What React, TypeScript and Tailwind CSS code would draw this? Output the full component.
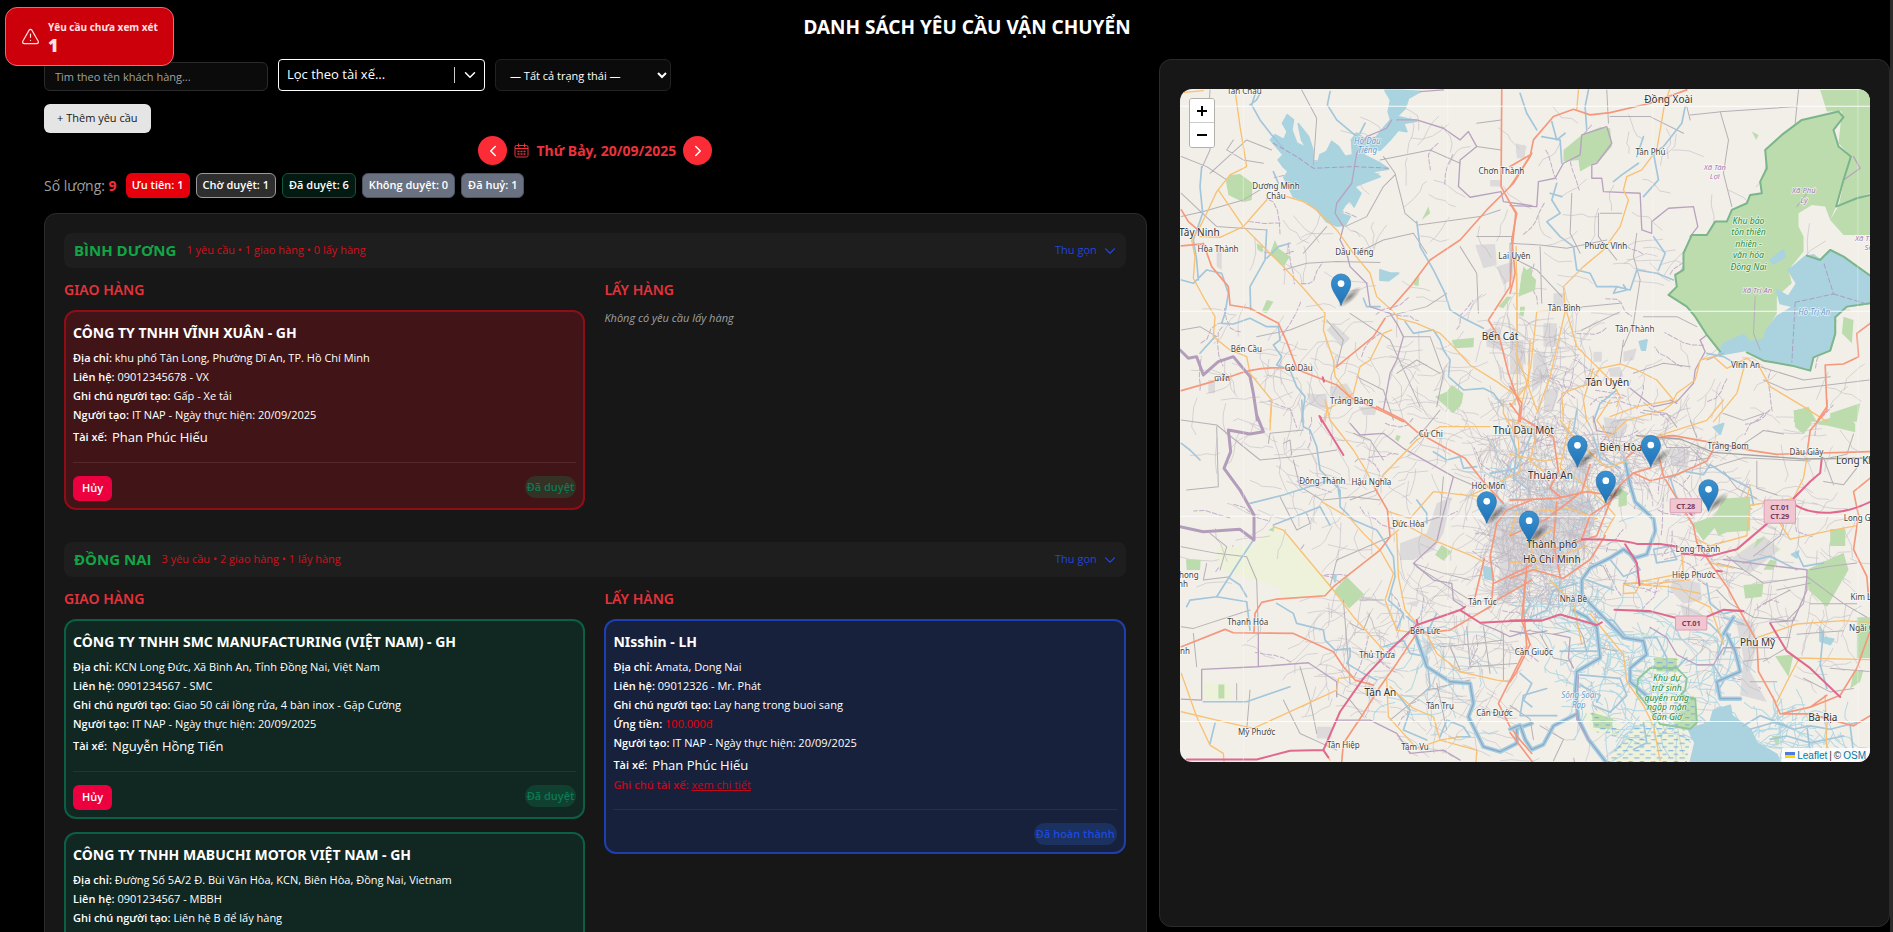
import { AlertTriangle, ChevronDown, ChevronLeft, ChevronRight } from "lucide-react";

type Tone = "red" | "green" | "blue";

type Request = {
  name: string;
  address: string;
  contact: string;
  note: string;
  advance?: string;
  creator: string;
  driver: string;
  hasDriverNote?: boolean;
  status: string;
  tone: Tone;
};

type Region = {
  name: string;
  summary: string;
  deliveries: Request[];
  pickups: Request[];
};

const regions: Region[] = [
  {
    name: "BÌNH DƯƠNG",
    summary: "1 yêu cầu • 1 giao hàng • 0 lấy hàng",
    deliveries: [
      {
        name: "CÔNG TY TNHH VĨNH XUÂN - GH",
        address: "khu phố Tân Long, Phường Dĩ An, TP. Hồ Chí Minh",
        contact: "09012345678 - VX",
        note: "Gấp - Xe tải",
        creator: "IT NAP - Ngày thực hiện: 20/09/2025",
        driver: "Phan Phúc Hiếu",
        status: "Đã duyệt",
        tone: "red",
      },
    ],
    pickups: [],
  },
  {
    name: "ĐỒNG NAI",
    summary: "3 yêu cầu • 2 giao hàng • 1 lấy hàng",
    deliveries: [
      {
        name: "CÔNG TY TNHH SMC MANUFACTURING (VIỆT NAM) - GH",
        address: "KCN Long Đức, Xã Bình An, Tỉnh Đồng Nai, Việt Nam",
        contact: "0901234567 - SMC",
        note: "Giao 50 cái lồng rửa, 4 bàn inox - Gặp Cường",
        creator: "IT NAP - Ngày thực hiện: 20/09/2025",
        driver: "Nguyễn Hồng Tiến",
        status: "Đã duyệt",
        tone: "green",
      },
      {
        name: "CÔNG TY TNHH MABUCHI MOTOR VIỆT NAM - GH",
        address: "Đường Số 5A/2 Đ. Bùi Văn Hòa, KCN, Biên Hòa, Đồng Nai, Vietnam",
        contact: "0901234567 - MBBH",
        note: "Liên hệ B để lấy hàng",
        creator: "IT NAP - Ngày thực hiện: 20/09/2025",
        driver: "Nguyễn Hồng Tiến",
        status: "Đã duyệt",
        tone: "green",
      },
    ],
    pickups: [
      {
        name: "NIsshin - LH",
        address: "Amata, Dong Nai",
        contact: "09012326 - Mr. Phát",
        note: "Lay hang trong buoi sang",
        advance: "100.000đ",
        creator: "IT NAP - Ngày thực hiện: 20/09/2025",
        driver: "Phan Phúc Hiếu",
        hasDriverNote: true,
        status: "Đã hoàn thành",
        tone: "blue",
      },
    ],
  },
];

const counters = [
  { label: "Ưu tiên: 1", className: "bg-[#e7000b]" },
  { label: "Chờ duyệt: 1", className: "border border-[#9a9a9a] bg-[#2e2e2e]" },
  { label: "Đã duyệt: 6", className: "border border-[#0b5a3c] bg-[#021a12]" },
  { label: "Không duyệt: 0", className: "border border-[#4a5565] bg-[#6a7282]" },
  { label: "Đã huỷ: 1", className: "border border-[#4a5565] bg-[#6a7282]" },
];

const cardTone: Record<Tone, string> = {
  red: "border-[#8f0d15] bg-[#411517]",
  green: "border-[#0b5f45] bg-[#112722]",
  blue: "border-[#1e3fae] bg-[#18213c]",
};

const dividerTone: Record<Tone, string> = {
  red: "border-[#54292b]",
  green: "border-[#1f3732]",
  blue: "border-[#26304a]",
};

const statusTone: Record<Tone, string> = {
  red: "bg-[#333225] text-[#0b7a55]",
  green: "bg-[#10402f] text-[#0b7a55]",
  blue: "bg-[#1b315f] text-[#1d49dc]",
};

function Field({ label, children }: { label: string; children: React.ReactNode }) {
  return (
    <p className="text-[11px] leading-[19px] text-white">
      <strong className="font-semibold">{label}</strong> {children}
    </p>
  );
}

function RequestCard({ request }: { request: Request }) {
  return (
    <article className={`rounded-xl border-2 px-[7px] pt-[9px] pb-[7px] ${cardTone[request.tone]}`}>
      <h4 className="mb-[3px] font-['Noto_Sans',sans-serif] text-sm leading-6 font-bold text-white">{request.name}</h4>
      <Field label="Địa chỉ:">{request.address}</Field>
      <Field label="Liên hệ:">{request.contact}</Field>
      <Field label="Ghi chú người tạo:">{request.note}</Field>
      {request.advance && (
        <Field label="Ứng tiền:">
          <span className="text-[#e7000b]">{request.advance}</span>
        </Field>
      )}
      <Field label="Người tạo:">{request.creator}</Field>
      <p className="mt-[3px] flex items-center gap-[5px] text-[13px] leading-5 text-white">
        <strong className="text-[11px] font-semibold">Tài xế:</strong>
        {request.driver}
      </p>
      {request.hasDriverNote && (
        <p className="text-[11px] leading-[19px] text-[#c10a1c]">
          <strong className="font-semibold">Ghi chú tài xế:</strong>{" "}
          <a href="#ghi-chu" className="underline">
            xem chi tiết
          </a>
        </p>
      )}
      <div className={`mt-[15px] flex items-start border-t pt-[13px] ${dividerTone[request.tone]}`}>
        {request.tone !== "blue" && (
          <button
            type="button"
            className="h-[25px] rounded-md bg-[#ec003f] px-[9px] text-[11px] font-semibold text-white"
          >
            Hủy
          </button>
        )}
        <span
          className={`ml-auto h-[22px] rounded-full px-0.5 text-[11px] leading-[22px] font-semibold ${statusTone[request.tone]}`}
        >
          {request.status}
        </span>
      </div>
    </article>
  );
}

function RequestColumn({
  title,
  empty,
  requests,
}: {
  title: string;
  empty: string;
  requests: Request[];
}) {
  return (
    <section className="min-w-0">
      <h3 className="mb-2.5 font-['Noto_Sans',sans-serif] text-sm leading-5 font-semibold text-[#e5323a]">{title}</h3>
      {requests.length === 0 ? (
        <p className="text-[11px] leading-4 text-[#a1a1a1] italic">{empty}</p>
      ) : (
        <div className="flex flex-col gap-[13px]">
          {requests.map((request) => (
            <RequestCard key={request.name} request={request} />
          ))}
        </div>
      )}
    </section>
  );
}

function RegionGroup({ region }: { region: Region }) {
  return (
    <section className="mb-8">
      <header className="mb-3 flex h-[35px] items-center rounded-lg bg-[#1e1e1e] pr-[7px] pl-2.5">
        <h2 className="text-[15px] font-bold text-[#12a546]">{region.name}</h2>
        <span className="ml-2.5 text-[11px] font-medium text-[#d4101a]">{region.summary}</span>
        <button type="button" className="ml-auto flex items-center gap-1 text-[11px] text-[#2146d8]">
          Thu gọn
          <ChevronDown size={18} strokeWidth={1.5} />
        </button>
      </header>
      <div className="grid grid-cols-2 gap-[19px]">
        <RequestColumn title="GIAO HÀNG" empty="Không có yêu cầu giao hàng" requests={region.deliveries} />
        <RequestColumn title="LẤY HÀNG" empty="Không có yêu cầu lấy hàng" requests={region.pickups} />
      </div>
    </section>
  );
}

// ---- Map ----

type MapSheet = {
  transform: string;
  farmland?: string;
  forest: string;
  urban: string;
  water: string;
  streams: string;
  rivers: string;
  minor: string;
  primary: string;
  trunk: string;
  motorway: string;
  boundary: string;
};

const northWest: MapSheet = {
  transform: "translate(-90 -147)",
  forest:
    "M240 405L270 402L308 430L305 480L280 487L235 465L228 425ZM375 600L360 640L400 680L420 650L385 625ZM350 780L370 785L350 820L335 815ZM905 1035L940 1060L935 1090L910 1120L855 1070L890 1055ZM905 900L972 893L970 922L915 925ZM1145 680L1115 700L1108 755L1145 750ZM1085 770L1060 805L1045 800L1070 770ZM320 610L340 620L335 638L322 628ZM835 500L840 520L815 540ZM795 715L808 710L805 738L790 735Z",
  urban:
    "M975 615L1035 612L1040 675L1000 685ZM1040 680L1090 665L1090 715L1060 735ZM530 870L550 850L600 895L575 920ZM1020 420h35v20h-35ZM1005 870L1050 860L1055 930L1010 920ZM1080 920h45v50h-45ZM540 1040L590 1030L620 1080L600 1100L540 1070ZM470 1060L530 1065L535 1110L480 1095ZM200 620L215 620L215 690L200 680ZM1098 310L1130 320L1120 350L1098 340ZM175 1020h20v40h-20Z",
  water:
    "M400 345L385 360L398 378L415 395L402 412L430 470L470 485L500 510L530 545L560 558L585 555L600 530L570 520L585 495L600 480L612 500L632 460L612 440L650 425L690 410L665 395L715 387L690 370L640 345L655 325L690 330L720 300L745 270L770 275L760 250L800 243L740 230L765 205L775 175L810 155L745 152L705 152L722 180L715 215L722 240L700 265L680 290L650 300L620 280L605 300L608 345L585 350L565 320L545 305L530 335L510 345L505 365L490 370L488 330L475 290L445 252L455 300L470 325L440 310L425 270L430 240L412 225L398 250L412 275L402 300L375 285L362 300ZM690 690L720 700L745 700L715 722L690 720ZM605 470L608 490L595 478Z",
  streams:
    "M318 155L305 195L330 240L365 285L400 325M540 155L532 195L560 240L620 290M155 380L150 440L158 520L130 600L140 660L145 720M350 570L345 660L300 740L302 810M94 720L130 730L170 690L215 700L235 760L225 820L215 850L250 852L300 835L350 860L385 860L390 900L370 915L395 950L380 975L420 990L440 1040L465 1070L455 1145M800 545L810 620L850 690L885 760L900 810L940 835L1000 865M765 845L790 880L850 870L870 900L880 930L900 960L895 1010L940 1050L1000 1045L1030 1060L1060 1100M420 610L385 620L350 655M640 775L650 800L690 800M300 195L320 180L330 160M630 280L645 250M370 395L385 430M195 890L150 940",
  rivers: "",
  minor:
    "M455 150L500 235L490 375M180 150L175 230L180 330L155 385M94 530L160 515L280 480L330 450M180 400L290 300L365 330M400 690L470 670L560 665L690 668M700 350L735 400L765 520L800 550M690 360L840 330L930 370M805 555L990 530L1050 510M830 640L790 580L700 600L620 640M585 560L650 530L700 440L735 405M94 870L150 860L200 890M560 980L580 900L530 840M710 830L830 800L890 760M760 890L840 890L880 1000L860 1100M94 350L170 380L230 420M460 640L530 560M600 820L720 900L770 1010L810 1100M980 320L1053 330M980 590L1085 590M930 620L980 700L985 820M1053 240L980 250M250 300L230 330L280 360L340 370M740 1000L800 960L870 1000M620 1010L700 1050L730 1140M320 890L420 870L520 830M94 460L200 560L350 570",
  primary:
    "M94 158L160 152M255 150L270 260L290 380L240 405L200 455L170 520L150 560L125 600L135 650L130 715L165 780L195 830L190 890L240 930L290 950L300 1000L365 1080L360 1145M205 450L280 560L400 680L460 745L525 820L520 870L550 960L555 1010L600 1070M350 480L310 525L280 560L210 592L150 590M410 470L460 485L500 510L540 550L560 570L610 640L660 700L680 770L730 815L745 835L800 850L870 880L910 920L960 975L1040 1025L1110 1075M725 870L700 880L660 960L630 980L610 1060L530 1110L525 1145M1100 700L1102 1080M1140 900L1135 1030L1080 1100",
  trunk:
    "M94 1052L240 1010Q340 970 445 990L560 1035L605 1075L700 1115L760 1145M160 610L185 680L235 740L240 795L300 805L385 850L410 905L440 985M94 618L160 612M94 510L115 545L150 575M1055 150L1053 440L1097 520L1085 640L1080 740L1015 840L1050 900L1075 1000L1110 1100L1105 1145M1145 340L1090 430L1010 510L930 600L840 660L780 740L720 808M705 835L670 890L560 980",
  motorway: "M510 1130L515 1145M518 1012L522 1025",
  boundary:
    "M810 155L880 150M725 240L710 265L650 290L620 340L605 430L560 490L555 520L580 560L570 600L590 640L600 680L620 700L650 730L660 800L720 820L740 850L760 890L740 960L720 1000L700 1110M740 240L800 240L880 265L930 300L955 275L980 320L930 360L925 440L960 472L1053 455L1060 485L1145 497",
};

const northEast: MapSheet = {
  transform: "translate(990 -147)",
  forest:
    "M875 240L985 215L1000 232L970 270L985 320L1022 350L1000 420L978 500L960 540L945 500L905 495L865 520L865 560L880 590L880 635L835 690L845 730L800 770L800 820L770 870L760 900L720 910L700 905L650 930L630 935L605 900L590 885L555 830L530 800L475 765L500 740L495 705L520 690L520 640L545 585L590 585L615 545L650 545L665 510L710 490L720 465L755 460L750 425L770 385L765 330L815 285ZM930 150L1080 150L1080 460L1040 475L985 500L1000 430L1022 350L985 310L995 215L950 215ZM960 540L990 490L1080 465L1080 585L1000 585ZM215 285L270 262L300 265L305 320L270 360L210 395L205 360L160 365L160 330ZM40 680L78 720L75 750L25 770ZM30 800L45 800L40 830L28 825ZM1000 830L1030 840L1025 910L995 880ZM860 1110L895 1100L920 1145L850 1145ZM960 1120L1050 1090L1040 1145L960 1145ZM725 275L745 285L738 300Z",
  urban:
    "M100 850h40v70h-40ZM70 940L105 935L115 1010L65 1060ZM105 1050L150 1040L130 1110L100 1120ZM0 900h40v100h-40ZM20 315h25v40h-25ZM340 935L380 925L370 960L340 965ZM250 935h25v30h-25ZM295 985L330 980L340 1010L300 1010ZM130 760L165 760L160 800L130 800Z",
  water:
    "M885 650L910 645L930 660L960 630L1000 650L1080 710L1080 790L1010 800L975 830L975 880L960 930L910 950L900 990L845 975L760 960L710 930L625 945L640 910L700 885L720 905L760 900L770 870L800 830L850 800L810 790L800 750L835 770L860 730L835 690L850 680ZM780 660L820 630L825 650L790 672ZM388 905L410 900L405 930L395 930Z",
  streams:
    "M30 160L50 220L80 270M235 150L225 200L230 270M525 200L515 250L460 320L430 340L445 420L400 470M140 430L125 480L150 520L110 545L150 590L190 620L200 690L240 700L260 740L320 740L360 750L380 690L440 700L490 720M430 590L465 640L445 690M95 290L150 300L155 370M125 245L140 300L165 280M310 425L335 405L385 370M400 290L380 350M590 940L640 950L700 985M250 1145L270 1090L320 1050M320 740L310 760L350 750L340 735M120 460L155 470",
  rivers: "",
  minor:
    "M0 610L90 615L170 625L290 600M90 620L95 790M0 650L80 690L155 770M630 215L655 300L640 400L665 500M540 225L640 215L860 200M290 150L295 250M185 460L180 580L210 640M265 520L265 590L320 660M270 520L335 520M380 580L370 650L390 720L370 850L340 920M215 870L330 815M165 815L220 800L330 790M400 830L500 830L560 860M330 970L340 900M750 980L880 1020L960 1010M735 770L730 880L750 930M370 1000L460 970L540 980M590 960L640 940M300 230L420 230L520 280M0 700L0 610M890 460L860 500M855 250L865 150M540 240L530 200M760 1020L830 1050L1077 1020",
  primary:
    "M205 150L200 208M478 150L462 200L440 330L395 390L350 410L340 450L355 480L330 560L280 630L220 680L190 710L160 740L165 800L200 920L260 980L300 1020L330 1070L320 1100M165 815L120 1010L80 1120M165 810L80 815L62 980L35 1090M490 1080L440 1020L380 990L330 972L270 985L240 1030L155 1060L160 1145M490 1080L380 1100L300 1130M490 1080L500 1060L555 1020L570 960L610 950L650 985L710 955L750 985L780 1040L880 1100L950 1145M705 970L680 1060L610 1145M18 620L22 950L80 1110M250 985L220 1080L230 1145",
  trunk:
    "M0 440L60 350L70 300L130 230L190 208L240 225L300 218L420 190L460 175L530 150M0 380L60 345M0 490L20 520L5 600L15 700L0 760M1080 850L1040 880L1045 950L1000 972L945 975L950 1100L920 1145M0 1040L35 1090L30 1145",
  motorway: "",
  boundary:
    "M0 497L80 500L85 425L135 415L160 370L210 345L215 285L290 260L305 310L260 370L245 375L245 415L275 415L280 455L390 460L395 570L425 580L425 545L475 505L550 500L563 560L540 590M590 885L570 900L585 935L555 990L550 1030L500 1085L430 1100L360 1045M1000 420L1050 385L1030 350",
};

const southWest: MapSheet = {
  transform: "translate(-90 933)",
  farmland:
    "M200 440L310 440L370 380L400 390L500 510L550 570L525 588L395 592L385 560L210 510ZM160 850L240 850L245 900L165 900Z",
  forest:
    "M552 572L590 530L643 583L597 625ZM108 478L152 480L150 510L110 510ZM205 853h18v42h-18ZM875 435L905 455L880 482L855 465ZM900 0L935 0L930 20L910 35ZM355 390L375 378L370 395ZM740 105L752 108L745 125L735 118Z",
  urban:
    "M860 310L905 290L880 400L850 450L790 480L750 480L750 430L830 400ZM500 980h45v35h-45ZM820 710L850 740L840 760L820 760ZM625 20L680 20L675 45L640 45ZM1000 320L1040 300L1145 330L1145 560L1040 570L1050 500L1030 440ZM1050 540L1090 560L1080 610L1040 600ZM765 610L810 600L800 620Z",
  water: "M1000 500L1025 505L1030 540L1005 535ZM550 530L558 525L555 545Z",
  streams:
    "M455 0L460 80L480 90L500 140L510 210L540 240L570 270L570 320L610 360L680 390L700 420L730 470L735 530L715 600L760 640L740 690M94 130L120 150L150 180M300 310L400 285L540 240M310 420L270 480L200 590M380 610L430 640L440 670L520 690L525 720L555 750L600 745L600 770L590 790L640 820L680 840M370 375L510 320L540 375M110 620L120 600L200 590L290 605L300 690M240 535L270 555L290 590M850 155L890 180L930 170L940 205L980 200M1020 220L1100 205L1145 100M160 905L290 905L420 860M195 970L180 1030M560 240L570 300M800 300L830 340L830 370M700 740L760 720L780 760L830 770L840 860L820 880M860 640L830 700L770 650M740 880L780 930L760 990L830 1020M870 1010L890 960L940 980L960 1010L920 1010M1110 820L1145 850L1120 900L1145 920",
  rivers: "M795 700L830 800L900 845L960 850L970 910L955 950L1000 1040L1050 1055L1100 1030L1100 985L1145 970",
  minor:
    "M94 60L200 75L330 180L430 170L560 150M200 80L205 260L110 270M355 130L360 100L460 90M400 130L420 120L425 165M430 180L450 260L515 300M520 300L610 290L690 300M390 290L410 330L440 390L480 370L470 340M600 300L680 270M94 440L200 460L290 470M170 490L160 540L240 530M290 470L320 540L325 700M540 560L560 480L720 410M630 600L700 600M600 670L640 690L660 640M94 680L130 685L300 630M210 510L230 440L180 400M580 600L600 850M450 800L480 900L500 1000M260 850L260 900M130 700L140 800M300 870L290 990M400 900L450 1000L560 1050M700 180L660 120L610 100M790 490L880 520L960 540M800 500L960 600M870 30L830 80L780 130M880 230L870 350L780 380M910 230L980 260M640 950L600 900L560 880M860 850L890 990M720 960L830 870L960 840M870 740L980 730L1060 720M950 680L960 800L1100 790M1000 680L1020 820M1060 700L1060 840M900 740L930 810",
  primary:
    "M525 0L540 60L610 150L650 215L675 265M370 380L400 390L450 450L550 570L610 650L700 750M515 305L600 355L640 400L690 450L730 520L705 600L740 690L800 700M740 400L745 530L765 630L800 670M715 335L780 355L850 275L960 287L1060 240L1110 215L1105 120L1060 40L1060 0M700 225L800 120L870 80L1020 80M740 360L850 420L960 465L1000 485M365 0L360 90M94 820L140 950L180 1035L220 1060L222 1085M94 935L200 960L310 985L430 930L560 870L565 835L610 830M710 840L715 950L800 1045M720 860L790 925L850 950L870 1020L980 1050L978 1085M830 700L860 760L930 815L1040 840L1080 845M720 410L745 390M1010 350L1000 290L960 287M800 1045L870 1020L930 1010M520 1050L540 1080",
  trunk:
    "M680 20L760 60L800 95L880 140L945 175L1000 245L1060 310M675 265L712 330L720 410L690 450L550 560L525 587L380 597L335 607L315 640L312 695M94 740L225 688L250 698L430 700L550 755L580 800L615 840L670 855M575 1085L580 1030L640 940L690 860L740 790L800 700L900 690L960 655L1020 620L1040 600L1145 540M1145 300L1070 330L1040 370L1020 470L1030 540L1025 600M1003 475L975 590M1130 500L1120 620L1130 740L1080 840L1045 910L1080 980L1110 1020L1145 1060M1030 550L1145 495",
  motorway:
    "M508 48L580 165M110 1078L320 1078L420 1052L520 1050L570 935L640 835L720 750L800 675L930 630L990 668L1145 660M520 1050L535 1072M800 660L803 675M930 630L945 620",
  boundary:
    "M600 70L630 105L700 100L760 145L910 230L880 340L860 425L790 490L850 540L905 550L910 600L940 620M155 900L155 808L320 800L475 788L560 845L560 890M94 897L155 900M325 700V800M560 960L660 960L740 1000L780 1060L880 1050L930 1080M990 670L1040 690L1080 710L1140 690",
};

const southEast: MapSheet = {
  transform: "translate(990 933) scale(1 1.018)",
  farmland:
    "M400 940L480 960L540 1000L530 1070L290 1070L340 1000ZM210 920L300 910L340 990L250 980ZM380 690L430 680L410 700ZM420 780L510 760L500 810L420 800ZM670 450L760 400L820 440L720 510Z",
  forest:
    "M850 30L890 25L905 70L880 100L855 80ZM905 70L1000 40L1035 70L1035 95L950 75ZM640 290L720 285L720 385L650 390L625 400L600 350L620 330ZM545 365L600 345L620 370L580 415ZM890 500L1000 450L1015 500L950 610L895 560ZM960 380h45v50h-45ZM700 545L760 540L755 580L705 585ZM795 755L850 750L835 815ZM1040 640h40v120h-40ZM430 760L500 760L500 800L440 800ZM245 920L310 940L300 970L250 965ZM475 935L550 870L560 960L520 975ZM325 260L350 270L350 310L325 315ZM740 410L765 405L730 440ZM780 470L800 475L790 500L760 500ZM1030 800L1060 795L1050 830L1020 850ZM785 990L810 990L800 1020Z",
  urban:
    "M0 350L100 300L200 250L260 330L230 420L150 500L0 520ZM675 640L730 655L740 720L720 800L770 890L690 870L700 760ZM490 520L570 540L575 590L520 600L480 560ZM180 180L250 190L220 250L190 240ZM510 600L560 620L600 650L520 640ZM480 140L540 150L530 210L480 190ZM760 400L810 440L720 510L660 470ZM280 50L350 60L340 110L290 110Z",
  water:
    "M535 970L600 950L610 915L660 900L665 930L720 970L740 1010L800 1045L810 1070L540 1070L555 1010ZM845 455L865 445L860 465ZM930 670L940 700L970 705L960 720L930 710ZM610 80L640 70L630 100ZM620 910L633 905L628 935Z",
  streams:
    "M0 100L20 150L10 230L50 260M200 30L190 90L220 130M500 290L480 230L520 210L580 220L600 190L660 230L720 260L730 310M430 440L480 430L500 470L440 480L430 440M300 470L340 520L390 500L360 460M590 540L600 600L640 630L680 620M700 480L780 460L860 500M860 450L880 490L940 480M940 680L930 780L950 850M620 760L640 700L600 660L560 640L520 670M560 780L610 780L640 830L620 860M260 640L310 650L350 700M30 560L60 600L40 640M210 810L330 820L350 870L300 920L250 900M210 840L270 870L260 890M110 850L40 870L30 930L140 930M470 800L470 760L440 700L400 700M720 970L790 950L850 970L900 960L960 970L1040 950M780 1000L830 990L900 1010L1000 990M890 960L900 1040M1020 960L1030 1040M200 540L130 560L110 620L60 640M150 740L260 740M660 690L640 750M500 790L530 760M400 950L410 1010L370 1030M310 560L230 530M700 960L750 930L830 960M640 640L700 660M340 220L310 260M250 110L270 170L330 200",
  rivers:
    "M345 180L360 250L375 300L430 350L435 385L410 455L375 465L340 440L300 465L240 495L215 530L215 575L260 620L340 700L400 710L410 750L360 790L360 830L420 880M190 620L230 640L260 670L270 760L200 800L195 860L205 940L235 1000L290 1070M0 970L30 958L45 1000L65 1030L100 1015L130 960L200 925M650 690L675 740L690 800L620 830L630 880L690 880M640 690L670 640",
  minor:
    "M500 80L470 40L400 30M640 40L700 60L760 40M700 130L760 90L820 100M450 100L470 140L540 140L600 200L700 170L900 180M540 60L560 110M740 180L740 260L800 280M640 210L680 260L740 290M620 480L700 500L760 540L890 520M620 560L660 600L730 640L830 650L880 600L890 520M650 460L700 500M780 320L820 370L810 400L730 460M890 520L1000 600L1070 640M760 600L840 560M800 560L900 540M850 640L830 730L760 770M700 770L780 760M860 690L1000 680M880 820L960 860L1030 850M900 600L1040 600M1040 480L960 490L900 500M940 240L1000 250L1040 200M940 170L970 250M960 170L1010 160L1030 100M0 900L60 940L70 1000M90 960L160 1000L130 1063M240 480L280 490L300 530M340 540L400 540M200 660L220 700L230 740M90 690L130 760L180 770M60 680L130 690L180 680M270 730L320 740M540 180L600 170M760 700H840M720 730h60M720 830h80M960 790L1077 800",
  primary:
    "M300 0L260 60L295 110L350 60L460 30L500 0M0 60L80 90L60 180L100 210M150 60L200 120L290 200L350 180M640 0L590 60L430 110L380 105M890 170L880 230L850 290L720 310L710 400L600 430L560 410M840 410L960 385L1040 370M840 410L800 350M340 570L340 545L520 510L515 455M340 570L376 568L388 545L540 530M535 580L600 610L640 720M740 700L860 660L1000 650L1080 655M0 480L120 470L230 430M60 330L180 320L260 350M120 530L190 600L215 720M240 630L290 690L340 750L350 830L400 900L430 960L450 1063M860 760L1080 765M865 765L830 830L800 890M945 870L950 1040M600 480L670 495M400 545L470 550L570 570M180 60L150 200L210 240L280 300L315 340L280 400M80 500L60 420L130 380M0 160L100 180L160 170M20 330L0 400M710 290L720 250",
  trunk:
    "M350 170Q420 105 490 105L620 128L730 150L800 160L1080 152M610 145L590 180L500 220L420 238L370 215L330 250L300 300L240 340L215 410M422 200L370 215M450 180L460 225L500 290L550 370L560 420L600 480L650 550L700 640L740 710L745 800L790 880L810 925L900 905L950 870M0 295L140 290L230 270L300 280M0 10L30 50L130 110L145 210L120 260L150 285M0 525L70 500L160 525L240 470L285 400M45 530L35 650L60 720L20 800L0 830M0 980L70 1070M1080 230L1030 270L1045 340L1030 440L1070 520L1075 580M1080 680L1040 790L990 870L900 905M950 0L950 30L900 90L890 160M820 925H900L1030 960L1080 930M0 400L110 350L215 270L240 190M300 300L260 400L130 440M140 300L130 420L150 520",
  motorway:
    "M215 410Q340 410 380 424L450 424L500 432M515 452L600 460L680 440L770 365M855 310Q900 335 960 332T1080 300M850 290L900 240L930 215L935 170M345 425L380 480L388 545M0 650H95L150 632L260 663L275 655M313 618L420 622L490 640L550 655L640 618L700 622M780 658L830 740L900 790L990 875M525 315L545 340M620 503L635 505",
  boundary:
    "M250 50L260 90L310 100M420 670L470 700L500 750L560 780L610 780L640 730L690 730M780 655L850 650L890 560L890 500L800 490L640 470M130 690L180 700L175 760L190 790M0 680L60 690L110 680M205 810L200 940L240 1010M480 0L500 10",
};

const sheets = [northWest, northEast, southWest, southEast];

// Small deterministic generator for the dense street mesh around the cities.
function streetMesh(cx: number, cy: number, rx: number, ry: number, count: number, seed: number) {
  let state = seed;
  const next = () => {
    state = (state * 16807) % 2147483647;
    return state / 2147483647;
  };
  let d = "";
  for (let i = 0; i < count; i++) {
    const angle = next() * Math.PI * 2;
    const radius = Math.sqrt(next());
    let x = cx + Math.cos(angle) * radius * rx;
    let y = cy + Math.sin(angle) * radius * ry;
    let heading = Math.floor(next() * 4) * 1.57 + 0.4;
    d += `M${x.toFixed(0)} ${y.toFixed(0)}`;
    for (let step = 0; step < 4; step++) {
      heading += (next() - 0.5) * 1.1;
      x += Math.cos(heading) * (12 + next() * 26);
      y += Math.sin(heading) * (12 + next() * 26);
      d += `L${x.toFixed(0)} ${y.toFixed(0)}`;
    }
  }
  return d;
}

const meshes = [
  streetMesh(1080, 1380, 170, 170, 300, 11),
  streetMesh(1120, 1150, 250, 160, 230, 23),
  streetMesh(1060, 860, 160, 180, 110, 31),
  streetMesh(1420, 1080, 220, 100, 80, 47),
  streetMesh(1035, 1035, 1035, 1000, 330, 59),
  streetMesh(1740, 1480, 300, 330, 110, 67),
  streetMesh(700, 1700, 330, 250, 130, 71),
  streetMesh(520, 1010, 330, 260, 90, 83),
];

const communeLines = [
  streetMesh(1035, 1035, 1035, 1000, 90, 127),
  streetMesh(1250, 1250, 350, 350, 60, 131),
];

const creeks = [
  streetMesh(1400, 1760, 240, 200, 150, 91),
  streetMesh(1160, 1560, 120, 120, 50, 97),
  streetMesh(1880, 1930, 150, 60, 50, 101),
  streetMesh(800, 1800, 180, 180, 30, 107),
  streetMesh(1150, 1220, 200, 160, 40, 109),
];

type LabelKind = "town" | "city" | "commune" | "reserve" | "lake";

const labelClass: Record<LabelKind, string> = {
  town: "fill-[#444444] text-[24px]",
  city: "fill-[#333333] text-[30px]",
  commune: "fill-[#a878b4] text-[23px] italic",
  reserve: "fill-[#2b8f3c] text-[26px] italic",
  lake: "fill-[#6a9cc8] text-[24px] italic",
};

const labels: [string, number, number, LabelKind][] = [
  ["Tân Châu", 193, 5, "town"],
  ["Dương Minh", 288, 290, "town"],
  ["Châu", 288, 320, "town"],
  ["Tây Ninh", 58, 429, "city"],
  ["Hòa Thành", 114, 479, "town"],
  ["Dầu Tiếng", 523, 488, "town"],
  ["Hồ Dầu", 562, 155, "lake"],
  ["Tiếng", 562, 183, "lake"],
  ["Chơn Thành", 964, 245, "town"],
  ["Lai Uyên", 1003, 501, "town"],
  ["Bến Cát", 960, 741, "city"],
  ["Bến Cầu", 199, 780, "town"],
  ["Gò Dầu", 356, 837, "town"],
  ["Trảng Bàng", 515, 934, "town"],
  ["បាវិត", 126, 865, "town"],
  ["Đồng Xoài", 1465, 31, "city"],
  ["Tân Phú", 1411, 187, "town"],
  ["Xã Tân", 1604, 233, "commune"],
  ["Lợi", 1604, 261, "commune"],
  ["Xã Phú", 1871, 303, "commune"],
  ["Lý", 1871, 332, "commune"],
  ["Khu bảo", 1705, 396, "reserve"],
  ["tồn thiên", 1705, 430, "reserve"],
  ["nhiên -", 1705, 464, "reserve"],
  ["văn hóa", 1705, 498, "reserve"],
  ["Đồng Nai", 1705, 533, "reserve"],
  ["Xã Trị An", 1732, 602, "commune"],
  ["Xã Thanh", 2072, 446, "commune"],
  ["Sơn", 2072, 475, "commune"],
  ["Hồ Trị An", 1902, 668, "lake"],
  ["Phước Vĩnh", 1277, 470, "town"],
  ["Tân Bình", 1152, 657, "town"],
  ["Tân Thành", 1364, 719, "town"],
  ["Vĩnh An", 1696, 827, "town"],
  ["Tân Uyên", 1282, 880, "city"],
  ["Củ Chi", 752, 1033, "town"],
  ["Thủ Dầu Một", 1030, 1023, "city"],
  ["Đông Thành", 427, 1173, "town"],
  ["Hậu Nghĩa", 574, 1176, "town"],
  ["Hóc Môn", 925, 1190, "town"],
  ["Đức Hòa", 685, 1302, "town"],
  ["Tân Túc", 907, 1538, "town"],
  ["Thạnh Hóa", 203, 1598, "town"],
  ["Bến Lức", 735, 1625, "town"],
  ["Thủ Thừa", 591, 1695, "town"],
  ["Tân An", 601, 1810, "city"],
  ["Tân Trụ", 780, 1849, "town"],
  ["Cần Đước", 943, 1871, "town"],
  ["Mỹ Phước", 230, 1926, "town"],
  ["Tân Hiệp", 490, 1967, "town"],
  ["Tầm Vu", 705, 1973, "town"],
  ["Cần Giuộc", 1061, 1686, "town"],
  ["Mộc Phong", -8, 1455, "town"],
  ["Thạnh", -12, 1484, "town"],
  ["Bình", 4, 1685, "town"],
  ["Biên Hòa", 1322, 1075, "city"],
  ["Thuận An", 1111, 1158, "city"],
  ["Trảng Bom", 1644, 1070, "town"],
  ["Dầu Giây", 1879, 1089, "town"],
  ["Long Khánh", 2052, 1114, "city"],
  ["Long Giao", 2048, 1285, "town"],
  ["Thành phố", 1115, 1366, "city"],
  ["Hồ Chí Minh", 1115, 1409, "city"],
  ["Long Thành", 1553, 1377, "town"],
  ["Hiệp Phước", 1541, 1455, "town"],
  ["Nhà Bè", 1180, 1528, "town"],
  ["Kim Long", 2064, 1522, "town"],
  ["Ngãi Giao", 2062, 1615, "town"],
  ["Phú Mỹ", 1732, 1660, "city"],
  ["Khu dự", 1460, 1768, "reserve"],
  ["trữ sinh", 1460, 1797, "reserve"],
  ["quyển rừng", 1460, 1826, "reserve"],
  ["ngập mặn", 1460, 1854, "reserve"],
  ["Cần Giờ", 1460, 1883, "reserve"],
  ["Sông Soài", 1196, 1817, "lake"],
  ["Rạp", 1196, 1845, "lake"],
  ["Bà Rịa", 1928, 1884, "city"],
];

const shields = [
  { x: 1517, y: 1250, lines: ["CT.28"] },
  { x: 1799, y: 1268, lines: ["CT.01", "CT.29"] },
  { x: 1533, y: 1602, lines: ["CT.01"] },
];

const pins = [
  [483, 650],
  [1192, 1135],
  [1412, 1134],
  [1277, 1241],
  [1585, 1267],
  [920, 1303],
  [1047, 1361],
];

function MapCanvas() {
  return (
    <svg
      viewBox="0 0 2070 2019"
      preserveAspectRatio="xMidYMid slice"
      className="h-full w-full bg-[#f2efe9] font-['Noto_Sans',sans-serif]"
      role="img"
      aria-label="Bản đồ yêu cầu vận chuyển"
    >
      <defs>
        <linearGradient id="pin" x1="0" y1="0" x2="0" y2="1">
          <stop offset="0" stopColor="#3b92cf" />
          <stop offset="1" stopColor="#1f72b8" />
        </linearGradient>
        <radialGradient id="pin-shadow">
          <stop offset="0" stopColor="#000000" stopOpacity="0.45" />
          <stop offset="1" stopColor="#000000" stopOpacity="0" />
        </radialGradient>
        <pattern id="marsh" width="34" height="22" patternUnits="userSpaceOnUse">
          <path d="M2 5H18M19 16H32" stroke="#6fa3e0" strokeWidth="3" />
        </pattern>
      </defs>

      <g fill="none" strokeLinejoin="round" strokeLinecap="round">
        {communeLines.map((d, i) => (
          <path key={i} d={d} stroke="#c3afc9" strokeWidth="3" strokeDasharray="14 6" />
        ))}
      </g>
      {sheets.map((sheet) => (
        <g key={sheet.transform} transform={sheet.transform}>
          {sheet.farmland && <path d={sheet.farmland} fill="#eef2da" />}
          <path d={sheet.urban} fill="#dcdadb" />
        </g>
      ))}

      <g fill="none" strokeLinejoin="round" strokeLinecap="round">
        {creeks.map((d, i) => (
          <path key={i} d={d} stroke="#b4d8e3" strokeWidth="3" />
        ))}
        {meshes.map((d, i) => (
          <path key={i} d={d} stroke="#bdb8c0" strokeWidth="2" opacity="0.8" />
        ))}
      </g>
      {sheets.map((sheet) => (
        <g key={sheet.transform} transform={sheet.transform}>
          <path d={sheet.forest} fill="#bcdcae" />
          <path d={sheet.water} fill="#aad3df" stroke="#aad3df" strokeWidth="6" strokeLinejoin="round" />
        </g>
      ))}
      <path
        d="M1390 1890L1470 1910L1530 1950L1520 2019L1280 2019L1330 1950ZM1230 1870L1290 1890L1330 1950L1250 1930ZM1420 1710L1500 1710L1490 1750L1410 1740ZM1480 1830L1540 1820L1550 1910L1480 1920Z"
        fill="url(#marsh)"
      />

      <g fill="none" strokeLinejoin="round" strokeLinecap="round">
        {sheets.map((sheet) => (
          <g key={sheet.transform} transform={sheet.transform}>
            <path d={sheet.minor} stroke="#b5b1b6" strokeWidth="3" />
            <path d={sheet.streams} stroke="#a3c6da" strokeWidth="5" />
            <path d={sheet.rivers} stroke="#a5cfe0" strokeWidth="13" />
            <path d={sheet.rivers} stroke="#8ea8c8" strokeWidth="4" />
            <path d={sheet.boundary} stroke="#b9a3bf" strokeWidth="4" />
            <path d={sheet.primary} stroke="#f8c173" strokeWidth="4" />
            <path d={sheet.trunk} stroke="#f5987c" strokeWidth="5" />
            <path d={sheet.motorway} stroke="#e0698e" strokeWidth="6" />
          </g>
        ))}
        {/* national border */}
        <path
          d="M0 783L25 808L50 803L70 858L115 818L160 803L210 863L220 913L232 993L230 978L250 1028L210 1035L145 1023L152 1088L132 1138L180 1203L222 1278L222 1353L180 1321L70 1328L0 1313"
          stroke="#b39dba"
          strokeWidth="9"
        />
        {/* reserve edges */}
        <path
          d="M1975 68L1865 93L1805 138L1755 183L1760 238L1740 278L1745 313L1710 318L1700 343L1655 363L1640 398L1605 398L1580 438L1535 438L1510 493L1510 543L1485 558L1490 593L1465 618L1520 653L1545 683L1580 738L1620 788M1975 68L1990 85L1960 123L1975 173L2012 203L1990 273L1968 353L2030 328L2070 318M1700 790L1750 815L1835 830L1890 845L1900 805L1950 785L1965 735L1965 685L2000 653L2070 643M1880 500L1920 513L1950 483L1990 503L2070 560"
          stroke="#7db58c"
          strokeWidth="6"
        />
        <path
          d="M1370 1798L1375 1768L1410 1737L1490 1737L1520 1768L1515 1803L1500 1819L1545 1829L1550 1900L1530 1920L1440 1905L1410 1860L1370 1810Z"
          stroke="#8fc79a"
          strokeWidth="6"
        />
        <path
          d="M280 163L350 203L400 238L520 233L630 238M1845 640L1960 615L1930 520M1845 640L1835 820M1960 615L2060 645"
          stroke="#a99fc0"
          strokeWidth="3"
          strokeDasharray="14 8"
        />
        <path d="M1370 1040L1500 1050L1600 1090L1870 1110L2070 1107" stroke="#a3a3a3" strokeWidth="4" />
      </g>

      {/* tile seams */}
      <path d="M0 52H2070M0 667H2070M0 1282H2070M0 1897H2070" stroke="#ffffff" strokeWidth="3" opacity="0.9" />
      <path d="M190 0V2019M803 0V2019M1418 0V2019M2033 0V2019" stroke="#ffffff" strokeWidth="3" opacity="0.35" />

      <g
        textAnchor="middle"
        dominantBaseline="central"
        stroke="#ffffff"
        strokeOpacity="0.6"
        strokeWidth="5"
        paintOrder="stroke"
        strokeLinejoin="round"
      >
        {labels.map(([text, x, y, kind]) => (
          <text key={`${text}-${x}-${y}`} x={x} y={y} className={labelClass[kind]}>
            {text}
          </text>
        ))}
      </g>

      {shields.map((shield) => {
        const height = shield.lines.length * 28 + 14;
        return (
          <g key={`${shield.x}-${shield.y}`}>
            <rect
              x={shield.x - 47}
              y={shield.y - height / 2}
              width="94"
              height={height}
              rx="4"
              fill="#efc6d2"
              stroke="#dd9fb2"
              strokeWidth="3"
            />
            {shield.lines.map((line, i) => (
              <text
                key={line}
                x={shield.x}
                y={shield.y + (i - (shield.lines.length - 1) / 2) * 28}
                textAnchor="middle"
                dominantBaseline="central"
                className="fill-[#7d3a56] text-[22px] font-bold"
              >
                {line}
              </text>
            ))}
          </g>
        );
      })}

      {pins.map(([x, y]) => (
        <g key={`${x}-${y}`} transform={`translate(${x} ${y})`}>
          <ellipse cx="26" cy="-26" rx="46" ry="15" fill="url(#pin-shadow)" transform="rotate(-42 26 -26)" />
          <path
            d="M0 0C-7 -24 -29 -42 -29 -66A29 29 0 0 1 29 -66C29 -42 7 -24 0 0Z"
            fill="url(#pin)"
            stroke="#2a6fa8"
            strokeWidth="2"
          />
          <circle cy="-66" r="10" fill="#ffffff" />
        </g>
      ))}
    </svg>
  );
}

function MapPanel() {
  return (
    <aside className="col-span-2 rounded-xl border border-[#2b2b2b] bg-[#171717] pt-[29px] pr-[19px] pl-5">
      <div className="relative h-[673px] overflow-hidden rounded-xl">
        <MapCanvas />
        <div className="absolute top-[9px] left-[9px] flex flex-col overflow-hidden rounded-[3px] border border-[#b3b0ac] text-black">
          <button
            type="button"
            aria-label="Phóng to"
            className="flex h-6 w-6 items-center justify-center border-b border-[#cccccc] bg-white"
          >
            <svg viewBox="0 0 10 10" className="h-2.5 w-2.5" stroke="currentColor" strokeWidth="2">
              <path d="M0 5H10M5 0V10" />
            </svg>
          </button>
          <button
            type="button"
            aria-label="Thu nhỏ"
            className="flex h-6 w-6 items-center justify-center bg-white"
          >
            <svg viewBox="0 0 10 10" className="h-2.5 w-2.5" stroke="currentColor" strokeWidth="2">
              <path d="M0 5H10" />
            </svg>
          </button>
        </div>
        <div className="absolute right-0 bottom-0 flex h-[14px] items-center gap-0.5 bg-white/80 pr-1 pl-[3px] font-['Liberation_Sans',sans-serif] text-[10px] text-[#333333]">
          <svg viewBox="0 0 10 6" className="h-1.5 w-2.5">
            <path fill="#4c7be1" d="M0 0h10v3H0z" />
            <path fill="#ffd500" d="M0 3h10v3H0z" />
          </svg>
          <a href="#leaflet" className="text-[#0078a8]">
            Leaflet
          </a>
          <span>|</span>
          <span>©</span>
          <a href="#osm" className="text-[#0078a8]">
            OSM
          </a>
        </div>
      </div>
    </aside>
  );
}

function Filters() {
  return (
    <div className="flex flex-wrap items-end gap-x-2.5 gap-y-[13px] text-[11px]">
      <input
        type="text"
        aria-label="Tìm theo tên khách hàng"
        placeholder="Tìm theo tên khách hàng..."
        className="h-[29px] w-56 rounded-md border border-[#2b2b2b] bg-[#0b0b0b] px-2.5 text-white placeholder:text-[#a1a1a1]"
      />
      <div className="relative">
        <select
          aria-label="Lọc theo tài xế"
          className="block h-8 w-[207px] appearance-none rounded-sm border border-white bg-black px-2 text-[13px] text-white"
        >
          <option>Lọc theo tài xế...</option>
        </select>
        <span className="pointer-events-none absolute inset-y-0 right-0 my-2 flex w-[31px] items-center justify-center border-l border-[#cccccc] text-white">
          <ChevronDown size={18} />
        </span>
      </div>
      <select
        aria-label="Trạng thái"
        className="h-8 w-[176px] rounded-md border border-[#222222] bg-[#0b0b0b] pl-2.5 text-[11px] text-white"
      >
        <option>— Tất cả trạng thái —</option>
      </select>
      <div className="w-full">
        <button type="button" className="h-[29px] rounded-md bg-[#e5e5e5] px-[13px] font-medium text-[#171717]">
          + Thêm yêu cầu
        </button>
      </div>
    </div>
  );
}

function CalendarIcon() {
  return (
    <svg viewBox="0 0 15 15" className="h-[15px] w-[15px]" fill="none" stroke="currentColor">
      <rect x="1" y="2.5" width="13" height="11.5" rx="1.5" />
      <path d="M1 5.5H14M4.5 0.5V4M10.5 0.5V4" />
      <path d="M3.5 8.5h2M6.5 8.5h2M9.5 8.5h2M3.5 11h2M6.5 11h2M9.5 11h2" strokeWidth="1.5" />
    </svg>
  );
}

function DateNav() {
  return (
    <div className="mt-[3px] flex items-center justify-center gap-[7px] text-[#ee323b]">
      <button
        type="button"
        aria-label="Ngày trước"
        className="flex h-[29px] w-[29px] items-center justify-center rounded-full bg-[#fb2c36] text-white"
      >
        <ChevronLeft size={18} />
      </button>
      <CalendarIcon />
      <span className="font-['Noto_Sans',sans-serif] text-sm font-bold">Thứ Bảy, 20/09/2025</span>
      <button
        type="button"
        aria-label="Ngày sau"
        className="flex h-[29px] w-[29px] items-center justify-center rounded-full bg-[#fb2c36] text-white"
      >
        <ChevronRight size={18} />
      </button>
    </div>
  );
}

export default function App() {
  return (
    <div className="flex h-screen overflow-hidden bg-black font-['Open_Sans','Noto_Sans',sans-serif] text-white">
      <main className="flex min-w-0 flex-1 flex-col pb-[5px] pl-11">
        <h1 className="pt-[13px] pb-[18px] text-center font-['Noto_Sans',sans-serif] text-[19px] leading-7 font-bold">
          DANH SÁCH YÊU CẦU VẬN CHUYỂN
        </h1>
        <div className="grid min-h-0 flex-1 grid-cols-5 grid-rows-[minmax(0,1fr)] gap-3">
          <div className="col-span-3 min-w-0">
            <Filters />
            <DateNav />
            <div className="mt-2 flex items-center gap-1.5 text-[11px] font-semibold">
              <p className="mr-[3px] text-sm font-normal text-[#a1a1a1]">
                Số lượng: <strong className="font-bold text-[#fb2c36]">9</strong>
              </p>
              {counters.map((counter) => (
                <span
                  key={counter.label}
                  className={`flex h-[25px] items-center rounded-md px-1.5 ${counter.className}`}
                >
                  {counter.label}
                </span>
              ))}
            </div>
            <div className="mt-[15px] rounded-xl border border-[#2b2b2b] bg-[#171717] pt-[19px] pr-5 pl-[19px]">
              {regions.map((region) => (
                <RegionGroup key={region.name} region={region} />
              ))}
            </div>
          </div>
          <MapPanel />
        </div>
      </main>
      <div className="w-[3px] bg-[#2b2b2b]" />

      <button
        type="button"
        className="absolute top-[7px] left-[5px] flex h-[59px] items-center gap-2 rounded-xl border border-[#f0686d] bg-[#cc000a] px-[15px] text-left text-[#ffe2e2]"
      >
        <AlertTriangle size={19} strokeWidth={1.5} />
        <span className="flex flex-col">
          <span className="text-[10px] leading-4 font-bold">Yêu cầu chưa xem xét</span>
          <span className="text-lg leading-5 font-extrabold">1</span>
        </span>
      </button>
    </div>
  );
}
